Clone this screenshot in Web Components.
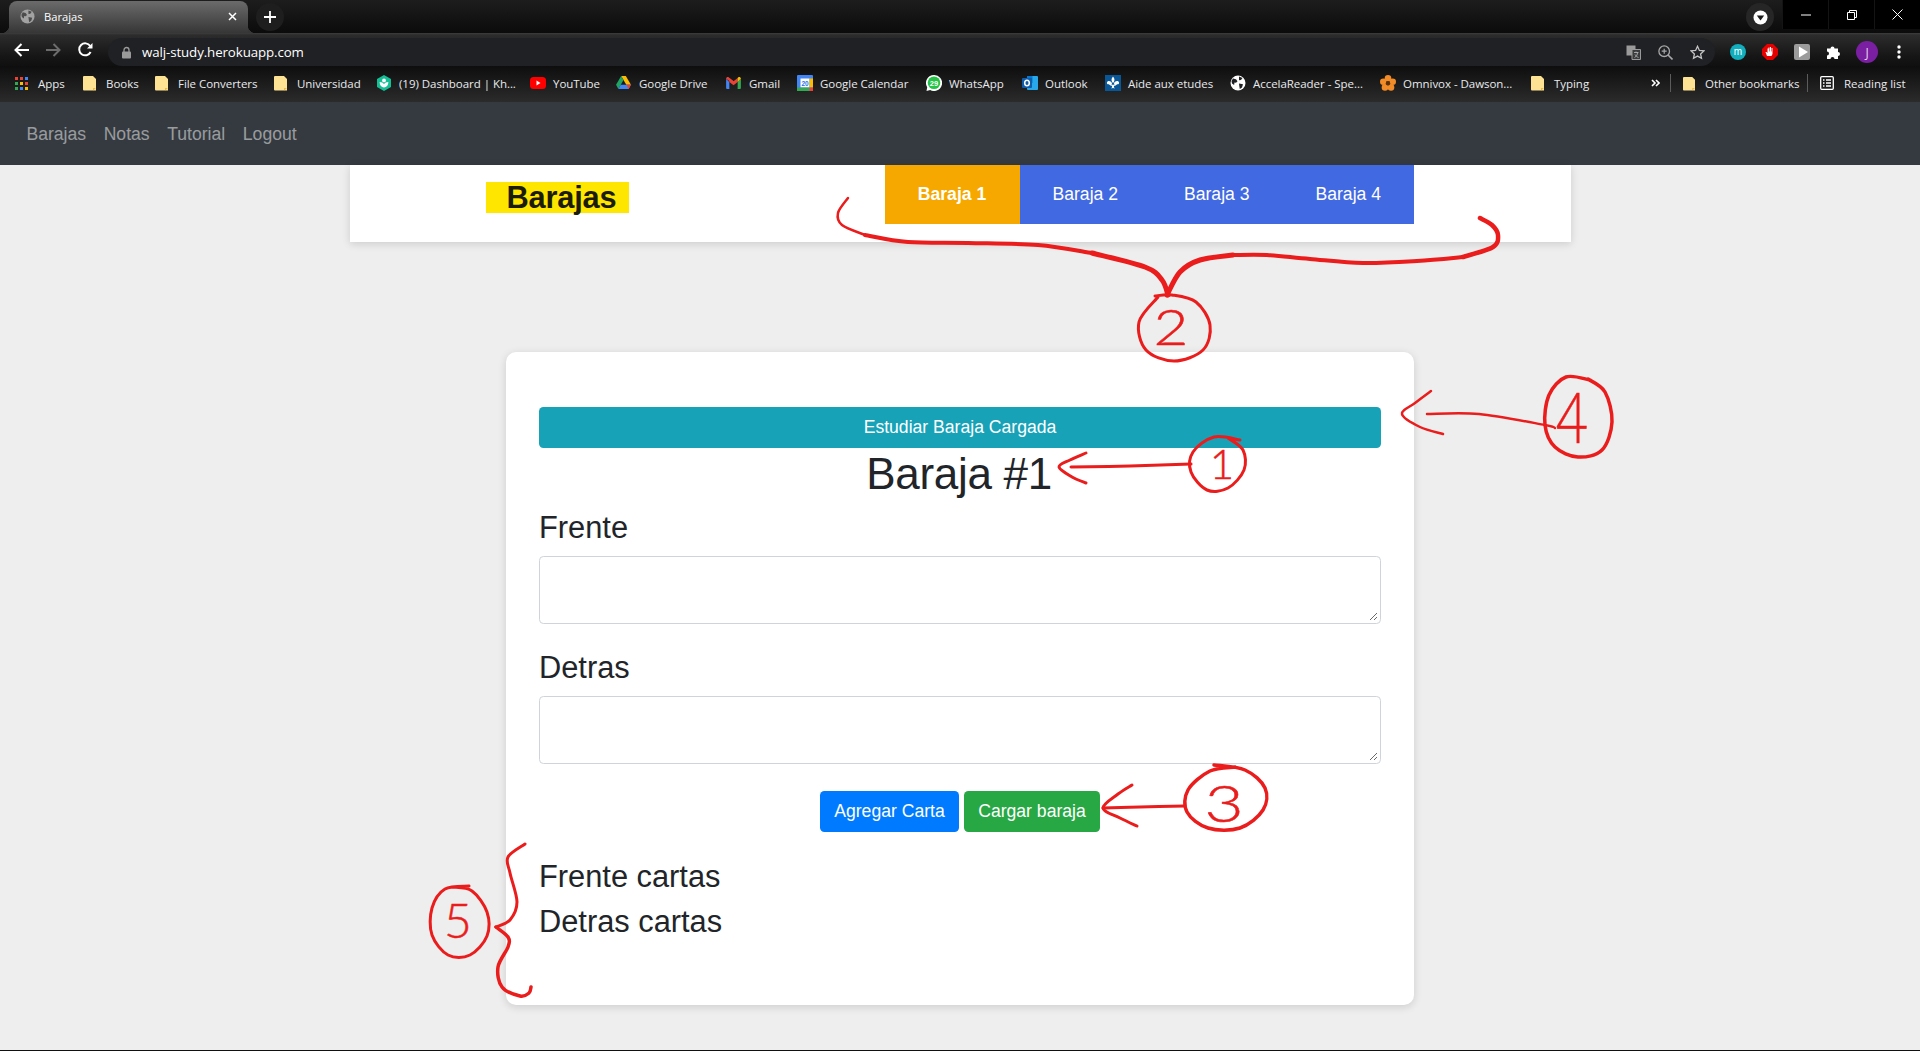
<!DOCTYPE html>
<html lang="es">
<head>
<meta charset="utf-8">
<title>Barajas</title>
<style>
  html, body { margin: 0; padding: 0; height: 1051px; overflow: hidden; background: #eee; }
  body { position: relative; font-family: "Liberation Sans", Arial, sans-serif; color: #212529; }
  bookmark-item svg { display: block; }
</style>
</head>
<body>
<browser-chrome></browser-chrome>
<bookmark-bar>
  <bookmark-item width="68" label="Apps">
    <svg slot="icon" viewBox="0 0 13 13" style="width:13px;height:13px">
      <rect width="3" height="3" fill="#ea4335"/><rect x="5" width="3" height="3" fill="#ea4335"/><rect x="10" width="3" height="3" fill="#4285f4"/>
      <rect y="5" width="3" height="3" fill="#34a853"/><rect x="5" y="5" width="3" height="3" fill="#fbbc05"/><rect x="10" y="5" width="3" height="3" fill="#ea4335"/>
      <rect y="10" width="3" height="3" fill="#34a853"/><rect x="5" y="10" width="3" height="3" fill="#4285f4"/><rect x="10" y="10" width="3" height="3" fill="#fbbc05"/>
    </svg>
  </bookmark-item>
  <bookmark-item width="72" label="Books"><folder-icon slot="icon"></folder-icon></bookmark-item>
  <bookmark-item width="119" label="File Converters"><folder-icon slot="icon"></folder-icon></bookmark-item>
  <bookmark-item width="102" label="Universidad"><folder-icon slot="icon"></folder-icon></bookmark-item>
  <bookmark-item width="154" label="(19) Dashboard | Kh...">
    <svg slot="icon" viewBox="0 0 16 16">
      <path d="M8 0l7 4v8l-7 4-7-4V4z" fill="#14bf96"/>
      <circle cx="8" cy="5.4" r="1.9" fill="#fff"/>
      <path d="M3.6 7c0 3.4 2 5.2 4.4 5.6 2.4-.4 4.4-2.2 4.4-5.6-2 0-3.600.8-4.400 2.200C7.200 7.800 5.600 7 3.600 7z" fill="#fff"/>
    </svg>
  </bookmark-item>
  <bookmark-item width="86" label="YouTube">
    <svg slot="icon" viewBox="0 0 16 16"><rect y="2" width="16" height="12" rx="3.5" fill="#f00"/><path d="M6.500 5.500l4 2.500-4 2.500z" fill="#fff"/></svg>
  </bookmark-item>
  <bookmark-item width="110" label="Google Drive">
    <svg slot="icon" viewBox="0 0 16 15" style="width:15px;height:14px">
      <path d="M5.500 0h5l5.500 9.500h-5z" fill="#fbbc05"/>
      <path d="M5.500 0L0 9.500l2.500 4.300L8 4.300z" fill="#1fa463"/>
      <path d="M2.500 14h11l2.500-4.500H5z" fill="#4285f4"/>
      <path d="M11 9.500l2.500 4.500 2.500-4.500z" fill="#ea4335"/>
    </svg>
  </bookmark-item>
  <bookmark-item width="71" label="Gmail">
    <svg slot="icon" viewBox="0 0 16 13" style="width:15px;height:12px">
      <path d="M0 2v10a1 1 0 001 1h2.500V5.500z" fill="#4285f4"/>
      <path d="M16 2v10a1 1 0 01-1 1h-2.500V5.500z" fill="#34a853"/>
      <path d="M0 2c0-1.800 2-2.500 3-1.500L8 4.500v3L0 2z" fill="#ea4335"/>
      <path d="M3.500 1L8 4.500 12.500 1v4.500L8 9 3.500 5.500z" fill="#ea4335"/>
      <path d="M16 2c0-1.800-2-2.500-3-1.500l-.5.500v4.500z" fill="#fbbc05"/>
    </svg>
  </bookmark-item>
  <bookmark-item width="129" label="Google Calendar">
    <svg slot="icon" viewBox="0 0 16 16">
      <rect width="16" height="16" rx="1" fill="#4285f4"/>
      <rect x="3.500" y="3.500" width="9" height="9" fill="#fff"/>
      <rect x="12.500" y="3.500" width="3.500" height="9" fill="#fbbc05"/>
      <rect y="12.500" width="12.500" height="3.500" fill="#34a853"/>
      <rect x="12.500" y="12.500" width="3.500" height="3.500" fill="#ea4335"/>
      <text x="8" y="10.600" text-anchor="middle" font-size="6.500" font-weight="700" font-family="Liberation Sans" fill="#1a73e8">20</text>
    </svg>
  </bookmark-item>
  <bookmark-item width="96" label="WhatsApp">
    <svg slot="icon" viewBox="0 0 16 16">
      <path d="M8 0a8 8 0 00-6.800 12.200L.5 16l3.700-1A8 8 0 108 0z" fill="#fff"/>
      <circle cx="8" cy="7.800" r="6.300" fill="#25c447"/>
      <text x="8" y="10.500" text-anchor="middle" font-size="7.500" font-weight="700" font-family="Liberation Sans" fill="#fff">29</text>
    </svg>
  </bookmark-item>
  <bookmark-item width="83" label="Outlook">
    <svg slot="icon" viewBox="0 0 16 16">
      <rect x="5" y="1" width="11" height="14" rx="1" fill="#28a8ea"/>
      <rect x="5" y="1" width="5.500" height="7" fill="#0078d4"/>
      <rect y="3" width="10" height="10" rx="1" fill="#0f5ca8"/>
      <ellipse cx="5" cy="8" rx="2.300" ry="2.800" fill="none" stroke="#fff" stroke-width="1.500"/>
    </svg>
  </bookmark-item>
  <bookmark-item width="125" label="Aide aux etudes">
    <svg slot="icon" viewBox="0 0 16 16">
      <rect width="16" height="16" fill="#095797"/>
      <path d="M8 1.500c1.800 2 1.800 3.400.8 6h-1.600c-1-2.600-1-4 .8-6z" fill="#fff"/>
      <path d="M7 8C5.800 5.500 2.800 5.300 2 7.200 1.500 8.700 3 9.800 4.200 9 3.800 10 5 10.600 6.700 9.800zM9 8c1.200-2.500 4.200-2.700 5-.8.500 1.500-1 2.600-2.200 1.800.4 1-.8 1.600-2.500.8z" fill="#fff"/>
      <path d="M5.500 9.800h5v1h-1.700l.7 3L8 12.800l-1.500 1 .7-3H5.500z" fill="#fff"/>
    </svg>
  </bookmark-item>
  <bookmark-item width="150" label="AccelaReader - Spe...">
    <svg slot="icon" viewBox="0 0 16 16">
      <circle cx="8" cy="8" r="7.500" fill="#fff"/>
      <path d="M3 3.500l3 .8 1.500 2-1.500 1.500-1.500-.3-.4 2.500L2 8.500 1.500 6zM9 1.500l3.500 1.500-1.500 2-2 .2zM9 8.500l4 .8-1 3.300-2.200 1.500-.5-3z" fill="#202124"/>
    </svg>
  </bookmark-item>
  <bookmark-item width="151" label="Omnivox - Dawson...">
    <svg slot="icon" viewBox="0 0 16 16">
      <g fill="#f28c28"><circle cx="8" cy="3.300" r="3.300"/><circle cx="12.700" cy="6.700" r="3.300"/><circle cx="11" cy="12.400" r="3.300"/><circle cx="5" cy="12.400" r="3.300"/><circle cx="3.300" cy="6.700" r="3.300"/></g>
      <circle cx="8" cy="8.200" r="2.200" fill="#5a3208"/>
    </svg>
  </bookmark-item>
  <bookmark-item width="120" label="Typing"><folder-icon slot="icon"></folder-icon></bookmark-item>
  <bookmark-end></bookmark-end>
</bookmark-bar>
<app-navbar>
  <a>Barajas</a><a>Notas</a><a>Tutorial</a><a>Logout</a>
</app-navbar>
<deck-header>
  <deck-tab active>Baraja 1</deck-tab>
  <deck-tab>Baraja 2</deck-tab>
  <deck-tab>Baraja 3</deck-tab>
  <deck-tab>Baraja 4</deck-tab>
</deck-header>
<deck-form></deck-form>
<ink-layer></ink-layer>

<script>
class FolderIcon extends HTMLElement {
  constructor() {
    super();
    this.attachShadow({ mode: 'open' });
  }

  connectedCallback() {
    this.shadowRoot.innerHTML = `
      <style>:host { display: block; width: 100%; height: 100%; } svg { display: block; width: 100%; height: 100%; }</style>
      <svg viewBox="0 0 13 16">
        <path d="M1 1h9l3 3v11.500H1a1 1 0 01-1-1V2a1 1 0 011-1z" fill="#fde293"/>
        <path d="M10 13h3l-3 2.500z" fill="#e9b949"/>
      </svg>
    `;
  }
}

class BrowserChrome extends HTMLElement {
  constructor() {
    super();
    this.attachShadow({ mode: 'open' });
  }

  connectedCallback() {
    this.shadowRoot.innerHTML = `
      <style>
        :host { display: block; font-family: "Open Sans", "Noto Sans", sans-serif; color: #fff; }
        svg { display: block; }

        .strip {
          display: flex;
          height: 33px;
          background: linear-gradient(#1d1d1d, #0b0b0b);
        }
        .tab {
          position: relative;
          display: flex;
          align-items: center;
          box-sizing: border-box;
          width: 239px;
          height: 32px;
          margin: 1px 0 0 9px;
          padding: 0 11px 2px 11px;
          border-radius: 8px 8px 0 0;
          background: linear-gradient(#6b6b6b, #363636);
          font-size: 11.200px;
        }
        .tab::before, .tab::after {
          content: '';
          position: absolute;
          bottom: 0;
          width: 8px;
          height: 8px;
        }
        .tab::before { left: -8px; background: radial-gradient(circle at 0 0, transparent 8px, #363636 8.500px); }
        .tab::after { right: -8px; background: radial-gradient(circle at 100% 0, transparent 8px, #363636 8.500px); }
        .tab span { margin-left: 9px; flex: 1; }
        .new {
          display: flex;
          align-items: center;
          justify-content: center;
          width: 28px;
          height: 28px;
          margin: 3px 0 0 8px;
          border-radius: 50%;
          background: #1e1e1e;
        }
        .profile {
          display: flex;
          align-items: center;
          justify-content: center;
          width: 28px;
          height: 28px;
          margin: 3px 8px 0 auto;
          border-radius: 50%;
          background: #262626;
        }
        .win {
          display: flex;
          height: 29px;
          width: 138px;
          background: #000;
        }
        .win div {
          flex: 1;
          display: flex;
          align-items: center;
          justify-content: center;
          border-left: 1px solid #141414;
        }

        .bar {
          display: flex;
          align-items: center;
          height: 33px;
          background: linear-gradient(#3d3d3d 0, #2c2c2c 2px, #151515 24px, #101010);
        }
        .nav { display: flex; align-items: center; gap: 17px; padding-left: 14px; }
        .omni {
          display: flex;
          align-items: center;
          box-sizing: border-box;
          height: 28px;
          width: 1607px;
          margin: 5px 0 0 15px;
          padding: 0 8px 0 13px;
          border-radius: 14px;
          background: #202124;
        }
        .url { margin-left: 10px; flex: 1; font-size: 13.300px; letter-spacing: -.1px; }
        .omni-icons { display: flex; gap: 17px; margin-right: 2px; }
        .ext { display: flex; align-items: center; gap: 16px; margin: 4px 0 0 15px; }
        .avatar { margin: 0 3px 0 -2px; }
      </style>

      <div class="strip">
        <div class="tab">
          <svg width="15" height="15" viewBox="0 0 16 16">
            <circle cx="8" cy="8" r="7.500" fill="#a2a2a2"/>
            <path d="M3 3.500l3 .8 1.500 2-1.500 1.500-1.500-.3-.4 2.500L2 8.500 1.500 6zM9 1.500l3.500 1.500-1.500 2-2 .2zM9 8.500l4 .8-1 3.300-2.200 1.500-.5-3z" fill="#4c4c4c"/>
          </svg>
          <span>Barajas</span>
          <svg width="9" height="9" viewBox="0 0 9 9"><path d="M1 1l7 7M8 1L1 8" stroke="#fff" stroke-width="1.500"/></svg>
        </div>
        <div class="new">
          <svg width="12" height="12" viewBox="0 0 12 12"><path d="M6 0v12M0 6h12" stroke="#fff" stroke-width="1.800"/></svg>
        </div>
        <div class="profile">
          <svg width="15" height="15" viewBox="0 0 15 15"><circle cx="7.500" cy="7.500" r="7" fill="#fff"/><path d="M3.800 5.500h7.400l-3.700 5z" fill="#1b1b1b"/></svg>
        </div>
        <div class="win">
          <div><svg width="10" height="10" viewBox="0 0 10 10"><path d="M0 5h10" stroke="#fff"/></svg></div>
          <div><svg width="10" height="10" viewBox="0 0 10 10"><path d="M.5 2.500h7v7h-7zM2.500 2.500v-2h7v7h-2" fill="none" stroke="#fff"/></svg></div>
          <div><svg width="11" height="11" viewBox="0 0 11 11"><path d="M.5.500l10 10M10.500.500l-10 10" stroke="#fff"/></svg></div>
        </div>
      </div>

      <div class="bar">
        <div class="nav">
          <svg width="15" height="14" viewBox="0 0 15 14"><path d="M7.500 1L1.500 7l6 6M1.500 7H15" fill="none" stroke="#fff" stroke-width="2"/></svg>
          <svg width="15" height="14" viewBox="0 0 15 14"><path d="M7.500 1l6 6-6 6M13.500 7H0" fill="none" stroke="#6c6c6c" stroke-width="2"/></svg>
          <svg width="15" height="15" viewBox="0 0 15 15"><path d="M12.600 10a6 6 0 11-.4-6" fill="none" stroke="#fff" stroke-width="2"/><path d="M14.500 1v5.500H9z" fill="#fff"/></svg>
        </div>
        <div class="omni">
          <svg width="11" height="13" viewBox="0 0 11 13"><path d="M3 6V4a2.500 2.500 0 015 0v2" fill="none" stroke="#9a9a9a" stroke-width="1.300"/><rect x="1" y="5.500" width="9" height="7" rx="1" fill="#9a9a9a"/></svg>
          <span class="url">walj-study.herokuapp.com</span>
          <div class="omni-icons">
            <svg width="15" height="15" viewBox="0 0 15 15"><rect x=".5" y=".5" width="9" height="10" fill="#9a9a9a"/><path d="M6 4.500h8.500v10H6z" fill="#3a3b3d" stroke="#9a9a9a"/><path d="M8 7.500h4.500M10 6.500v1M8.500 12.500c2 -1 3-3 3-5M9 9.500c.5 1.200 2 2.500 3.500 3" fill="none" stroke="#bbb" stroke-width=".8"/></svg>
            <svg width="15" height="15" viewBox="0 0 15 15"><circle cx="6.200" cy="6.200" r="5.300" fill="none" stroke="#a8a8a8" stroke-width="1.300"/><path d="M10 10l4.500 4.500" stroke="#a8a8a8" stroke-width="1.600"/><path d="M6.200 3.700v5M3.700 6.200h5" stroke="#a8a8a8" stroke-width="1.200"/></svg>
            <svg width="15" height="15" viewBox="0 0 15 15"><path d="M7.500 1.300l1.900 4.100 4.500.5-3.300 3 .9 4.400-4-2.200-4 2.200.9-4.400-3.300-3 4.500-.5z" fill="none" stroke="#c4c4c4" stroke-width="1.300"/></svg>
          </div>
        </div>
        <div class="ext">
          <svg width="16" height="16" viewBox="0 0 16 16"><circle cx="8" cy="8" r="8" fill="#11aebd"/><text x="8" y="11" text-anchor="middle" font-size="10" font-family="Liberation Sans" fill="#fff">m</text></svg>
          <svg width="16" height="16" viewBox="0 0 16 16"><path d="M5 0h6l5 5v6l-5 5H5l-5-5V5z" fill="#e60000"/><path d="M5 12L3.500 8l1 0 1 1V4.500h1V3.500h1v4h.5V3h1v4.500h.5V4h1v6l-1 2z" fill="#fff"/></svg>
          <svg width="16" height="16" viewBox="0 0 16 16"><rect width="16" height="16" rx="2" fill="#9b9b9b"/><path d="M5 2.500L14 8l-9 5.500z" fill="#fff"/></svg>
          <svg width="16" height="16" viewBox="0 0 16 16"><path d="M1 4.500h3.500a2 2 0 114 0H12V8a2 2 0 110 4v3H8.500a2 2 0 10-4 0H1v-3.500a2 2 0 100-4z" fill="#fff"/></svg>
          <svg class="avatar" width="22" height="22" viewBox="0 0 22 22"><circle cx="11" cy="11" r="11" fill="#7b1fa2"/><text x="11" y="15.500" text-anchor="middle" font-size="12" font-family="Open Sans" fill="#e6d5ee">J</text></svg>
          <svg width="4" height="14" viewBox="0 0 4 14"><circle cx="2" cy="2" r="1.700" fill="#fff"/><circle cx="2" cy="7" r="1.700" fill="#fff"/><circle cx="2" cy="12" r="1.700" fill="#fff"/></svg>
        </div>
      </div>
    `;
  }
}

class BookmarkBar extends HTMLElement {
  constructor() {
    super();
    this.attachShadow({ mode: 'open' });
  }

  connectedCallback() {
    this.shadowRoot.innerHTML = `
      <style>
        :host {
          display: flex;
          align-items: center;
          box-sizing: border-box;
          height: 36px;
          padding: 0 0 2px 15px;
          background: linear-gradient(#0e0e0e, #2b2b2b);
        }
      </style>
      <slot></slot>
    `;
  }
}

class BookmarkItem extends HTMLElement {
  constructor() {
    super();
    this.attachShadow({ mode: 'open' });
  }

  connectedCallback() {
    const label = this.getAttribute('label') || '';
    const width = this.getAttribute('width') || '100';

    this.shadowRoot.innerHTML = `
      <style>
        :host {
          display: flex;
          align-items: center;
          flex: none;
          width: ${width}px;
          font: 11.500px "Open Sans", "Noto Sans", sans-serif;
          letter-spacing: -.04px;
          color: #e8eaed;
          white-space: nowrap;
        }
        .icon { flex: none; width: 16px; height: 16px; margin-right: 7px; display: flex; align-items: center; }
        ::slotted(svg) { display: block; width: 16px; height: 16px; }
        ::slotted(folder-icon) { width: 13px; height: 16px; }
      </style>
      <div class="icon"><slot name="icon"></slot></div>
      <span>${label}</span>
    `;
  }
}

class BookmarkEnd extends HTMLElement {
  constructor() {
    super();
    this.attachShadow({ mode: 'open' });
  }

  connectedCallback() {
    this.shadowRoot.innerHTML = `
      <style>
        :host {
          display: flex;
          align-items: center;
          margin-left: auto;
          font: 11.500px "Open Sans", "Noto Sans", sans-serif;
          color: #e8eaed;
          white-space: nowrap;
        }
        .more { width: 19px; }
        .sep { width: 1px; height: 18px; background: #5c5c5c; margin: 0 12px 0 0; }
        .other { display: flex; align-items: center; width: 124px; }
        .reading { display: flex; align-items: center; width: 100px; }
        svg { display: block; flex: none; }
        .other svg, .reading svg { margin-right: 10px; }
      </style>
      <div class="more">
        <svg width="9" height="8" viewBox="0 0 9 8"><path d="M1 1l3 3-3 3M5 1l3 3-3 3" fill="none" stroke="#fff" stroke-width="1.600"/></svg>
      </div>
      <div class="sep"></div>
      <div class="other"><folder-icon style="width:12px;height:15px;margin-right:10px"></folder-icon><span>Other bookmarks</span></div>
      <div class="sep"></div>
      <div class="reading">
        <svg width="14" height="14" viewBox="0 0 14 14"><rect x=".7" y=".7" width="12.600" height="12.600" rx="1" fill="none" stroke="#fff" stroke-width="1.300"/><path d="M3 4h1.500M6 4h5M3 7h1.500M6 7h5M3 10h1.500M6 10h5" stroke="#fff" stroke-width="1.300"/></svg>
        <span>Reading list</span>
      </div>
    `;
  }
}

class AppNavbar extends HTMLElement {
  constructor() {
    super();
    this.attachShadow({ mode: 'open' });
  }

  connectedCallback() {
    this.shadowRoot.innerHTML = `
      <style>
        :host {
          display: flex;
          align-items: center;
          box-sizing: border-box;
          height: 63px;
          padding: 1px 17.600px 0;
          background: #343a40;
          font-size: 17.600px;
          color: rgba(255, 255, 255, .5);
        }
        ::slotted(a) { padding: 0 8.800px; }
      </style>
      <slot></slot>
    `;
  }
}

class DeckHeader extends HTMLElement {
  constructor() {
    super();
    this.attachShadow({ mode: 'open' });
  }

  connectedCallback() {
    this.shadowRoot.innerHTML = `
      <style>
        :host {
          display: flex;
          align-items: flex-start;
          box-sizing: border-box;
          width: 1221px;
          height: 77px;
          margin: 0 auto;
          background: #fff;
          box-shadow: 0 2px 8px rgba(0, 0, 0, .14);
        }
        .logo {
          box-sizing: border-box;
          width: 143px;
          height: 31px;
          margin: 17px 0 0 136px;
          padding-left: 21px;
          background: #ffe600;
          color: #1c1c00;
          font-size: 30.800px;
          font-weight: 700;
          letter-spacing: -.2px;
          line-height: 31px;
          white-space: nowrap;
        }
        .tabs { display: flex; margin-left: 256px; }
      </style>
      <div class="logo">Barajas</div>
      <div class="tabs"><slot></slot></div>
    `;
  }
}

class DeckTab extends HTMLElement {
  constructor() {
    super();
    this.attachShadow({ mode: 'open' });
  }

  connectedCallback() {
    this.shadowRoot.innerHTML = `
      <style>
        :host {
          display: block;
          box-sizing: border-box;
          width: 131.500px;
          height: 59px;
          background: #4169e1;
          color: #fff;
          font-size: 17.600px;
          line-height: 59px;
          text-align: center;
        }
        :host([active]) { width: 135px; background: #f7a800; font-weight: 700; }
      </style>
      <slot></slot>
    `;
  }
}

class DeckButton extends HTMLElement {
  constructor() {
    super();
    this.attachShadow({ mode: 'open' });
  }

  connectedCallback() {
    const color = this.getAttribute('color') || '#007bff';

    this.shadowRoot.innerHTML = `
      <style>
        :host {
          display: block;
          box-sizing: border-box;
          height: 41px;
          padding: 0 14px;
          border-radius: 4.400px;
          background: ${color};
          color: #fff;
          font-size: 17.600px;
          line-height: 40px;
          text-align: center;
        }
      </style>
      <slot></slot>
    `;
  }
}

class DeckField extends HTMLElement {
  constructor() {
    super();
    this.attachShadow({ mode: 'open' });
  }

  connectedCallback() {
    const label = this.getAttribute('label') || '';

    this.shadowRoot.innerHTML = `
      <style>
        :host { display: block; }
        h3 {
          margin: 0 0 10.200px;
          font-size: 30.800px;
          font-weight: 400;
          line-height: 37px;
        }
        .box {
          position: relative;
          box-sizing: border-box;
          height: 68px;
          border: 1px solid #ced4da;
          border-radius: 4.400px;
          background: #fff;
        }
        .box svg { position: absolute; right: 2px; bottom: 2px; }
      </style>
      <h3>${label}</h3>
      <div class="box">
        <svg width="9" height="9" viewBox="0 0 9 9"><path d="M1 8l7-7M5 8l3-3" stroke="#6a6a6a" stroke-width="1"/></svg>
      </div>
    `;
  }
}

class DeckForm extends HTMLElement {
  constructor() {
    super();
    this.attachShadow({ mode: 'open' });
  }

  connectedCallback() {
    this.shadowRoot.innerHTML = `
      <style>
        :host {
          display: block;
          box-sizing: border-box;
          width: 908px;
          height: 653px;
          margin: 110px auto 0;
          padding: 55px 33px 0;
          border-radius: 10px;
          background: #fff;
          box-shadow: 0 2px 8px rgba(0, 0, 0, .14);
        }
        h1 {
          margin: -1px 0 8.800px;
          font-size: 44px;
          font-weight: 400;
          letter-spacing: -.3px;
          line-height: 53px;
          text-indent: -2px;
          text-align: center;
        }
        .fields { display: flex; flex-direction: column; gap: 25px; }
        .actions { display: flex; justify-content: center; gap: 5px; margin-top: 27.200px; }
        .list { margin-top: 26px; font-size: 30.800px; line-height: 37px; }
        .list div { margin-bottom: 8px; }
      </style>
      <deck-button color="#17a2b8">Estudiar Baraja Cargada</deck-button>
      <h1>Baraja #1</h1>
      <div class="fields">
        <deck-field label="Frente"></deck-field>
        <deck-field label="Detras"></deck-field>
      </div>
      <div class="actions">
        <deck-button color="#007bff" style="width:139px">Agregar Carta</deck-button>
        <deck-button color="#28a745" style="width:136px">Cargar baraja</deck-button>
      </div>
      <div class="list">
        <div>Frente cartas</div>
        <div>Detras cartas</div>
      </div>
    `;
  }
}

// hand drawn marks on top of the screenshot, points in page coordinates
class InkLayer extends HTMLElement {
  constructor() {
    super();
    this.attachShadow({ mode: 'open' });
  }

  smooth(points) {
    let d = `M${points[0][0]} ${points[0][1]}`;
    for (let i = 0; i < points.length - 1; i++) {
      const p0 = points[i - 1] || points[i];
      const p1 = points[i];
      const p2 = points[i + 1];
      const p3 = points[i + 2] || p2;
      const c1x = p1[0] + (p2[0] - p0[0]) / 6;
      const c1y = p1[1] + (p2[1] - p0[1]) / 6;
      const c2x = p2[0] - (p3[0] - p1[0]) / 6;
      const c2y = p2[1] - (p3[1] - p1[1]) / 6;
      d += `C${c1x.toFixed(1)} ${c1y.toFixed(1)} ${c2x.toFixed(1)} ${c2y.toFixed(1)} ${p2[0]} ${p2[1]}`;
    }
    return d;
  }

  connectedCallback() {
    const strokes = [
      // brace 2
      [2.500, [[848, 198], [838, 213], [842, 225], [865, 235]]],
      [4, [[865, 235], [908, 242], [968, 243], [1038, 245], [1092, 253]]],
      [5, [[1092, 253], [1145, 267], [1162, 280], [1168, 295]]],
      [5, [[1167, 295], [1180, 272], [1200, 260], [1233, 255]]],
      [4, [[1233, 255], [1267, 255], [1310, 259], [1363, 263], [1417, 261], [1463, 257]]],
      [4.500, [[1463, 257], [1493, 247], [1498, 235], [1492, 225], [1480, 218]]],
      // arrow 1
      [3, [[1071, 467], [1130, 466], [1191, 464]]],
      [3, [[1086, 453], [1070, 460], [1059, 467], [1072, 477], [1086, 483]]],
      // arrow 4
      [2.500, [[1427, 414], [1479, 414], [1545, 425], [1555, 428]]],
      [2.500, [[1431, 391], [1415, 403], [1402, 414], [1420, 427], [1443, 434]]],
      // arrow 3
      [3, [[1103, 808], [1140, 807], [1185, 806]]],
      [3, [[1132, 785], [1118, 794], [1103, 808], [1120, 818], [1137, 826]]],
      // brace 5
      [3, [[525, 844], [508, 857], [510, 873], [517, 902], [510, 920], [496, 927]]],
      [3.500, [[496, 927], [508, 937], [508, 947], [498, 967], [502, 987], [520, 996], [529, 993], [531, 987]]],
      // circles, each a little open and crooked
      [3, [[1158, 297], [1139, 322], [1146, 350], [1174, 361], [1203, 350], [1210, 325], [1196, 302], [1172, 295], [1155, 296]]],
      [3, [[1240, 440], [1214, 437], [1193, 452], [1191, 472], [1207, 490], [1228, 488], [1244, 470], [1243, 450], [1228, 438]]],
      [3.500, [[1590, 380], [1566, 377], [1549, 395], [1545, 425], [1555, 447], [1578, 457], [1602, 450], [1612, 422], [1605, 392], [1588, 379]]],
      [3.500, [[1235, 767], [1210, 771], [1188, 790], [1187, 812], [1208, 828], [1240, 828], [1263, 810], [1265, 788], [1245, 770], [1214, 765]]],
      [3, [[469, 886], [445, 889], [432, 908], [432, 935], [448, 955], [470, 955], [487, 936], [487, 912], [472, 891], [452, 887]]],
    ];

    const paths = strokes.map(([w, pts]) => `<path d="${this.smooth(pts)}" stroke-width="${w}"/>`).join('');

    this.shadowRoot.innerHTML = `
      <style>
        :host { position: absolute; left: 0; top: 0; width: 1920px; height: 1051px; pointer-events: none; }
        svg { display: block; }
        path { fill: none; stroke: #ea1c1c; stroke-linecap: round; stroke-linejoin: round; }
        text { fill: #ea1c1c; stroke: #ea1c1c; stroke-width: .5; font-family: "Lato", "Liberation Sans", sans-serif; font-weight: 300; text-anchor: middle; }
        .foot { position: absolute; left: 0; right: 0; bottom: 0; height: 1px; background: #111; }
      </style>
      <svg width="1920" height="1051" viewBox="0 0 1920 1051">
        ${paths}
        <text x="1222" y="479" font-size="42">1</text>
        <text transform="translate(1171 345) scale(1.2 1)" font-size="50">2</text>
        <text transform="translate(1224 822) scale(1.3 1)" font-size="52">3</text>
        <text transform="translate(1572 443) scale(.8 1)" font-size="70">4</text>
        <text x="458" y="938" font-size="48">5</text>
      </svg>
      <div class="foot"></div>
    `;
  }
}

customElements.define('folder-icon', FolderIcon);
customElements.define('browser-chrome', BrowserChrome);
customElements.define('bookmark-bar', BookmarkBar);
customElements.define('bookmark-item', BookmarkItem);
customElements.define('bookmark-end', BookmarkEnd);
customElements.define('app-navbar', AppNavbar);
customElements.define('deck-header', DeckHeader);
customElements.define('deck-tab', DeckTab);
customElements.define('deck-button', DeckButton);
customElements.define('deck-field', DeckField);
customElements.define('deck-form', DeckForm);
customElements.define('ink-layer', InkLayer);
</script>
</body>
</html>
